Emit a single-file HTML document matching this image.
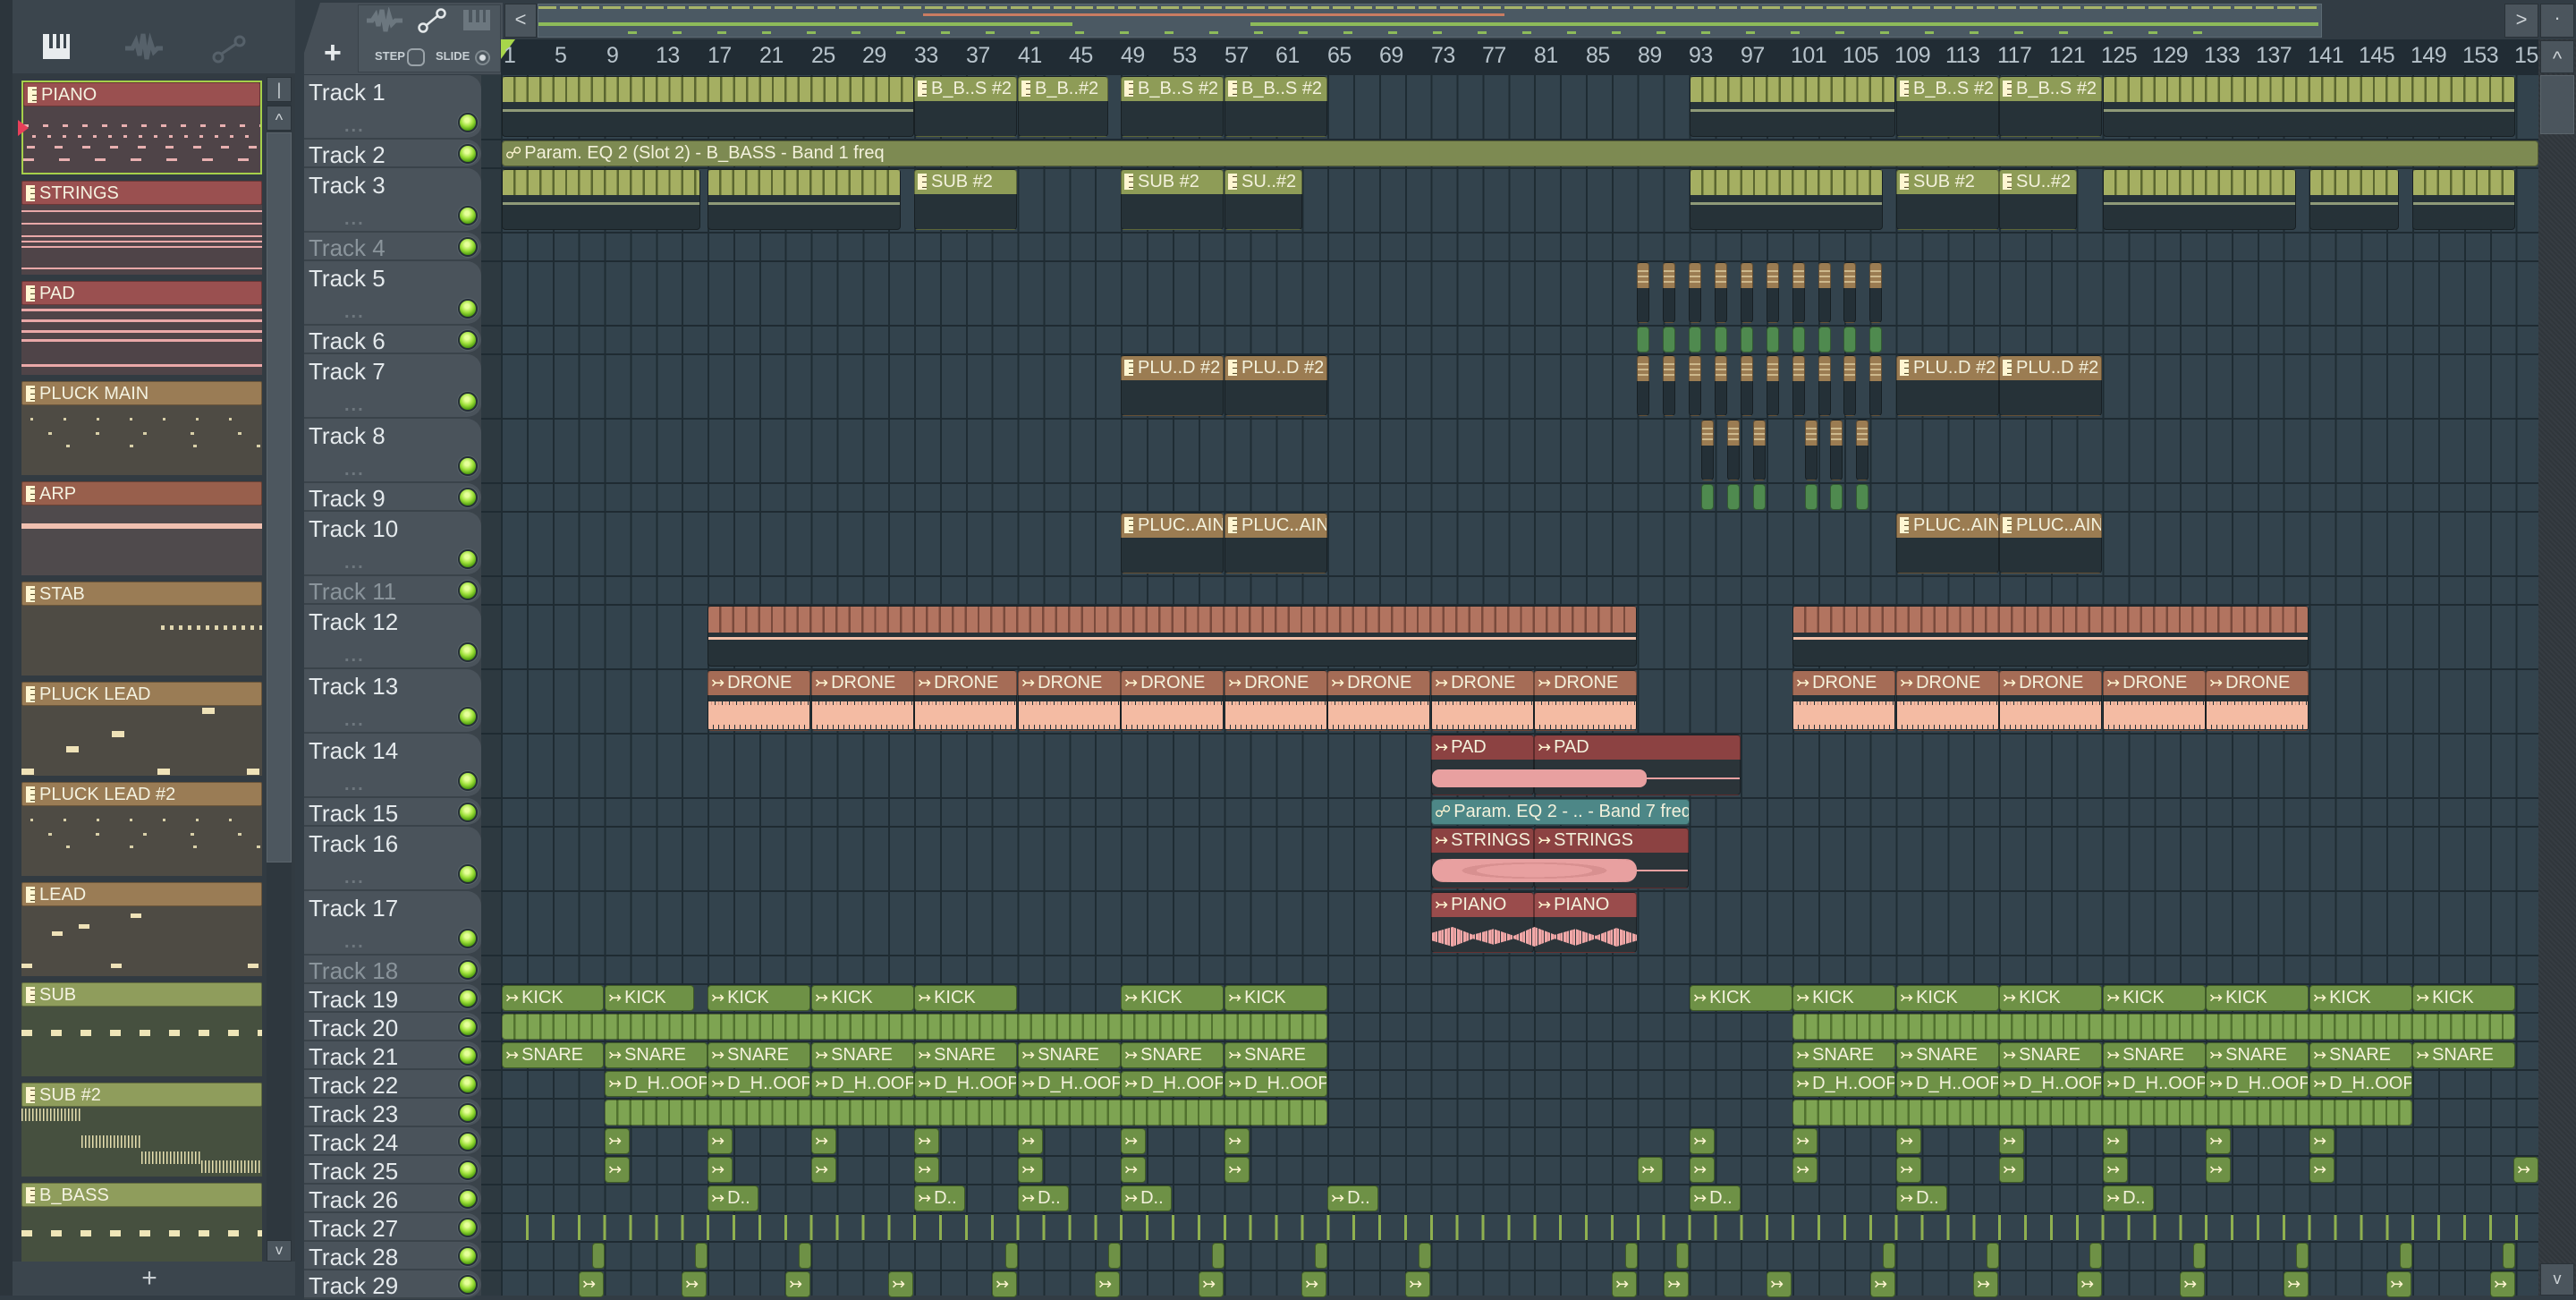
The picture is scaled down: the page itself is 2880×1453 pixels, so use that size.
<!DOCTYPE html>
<html><head><meta charset="utf-8">
<style>
*{box-sizing:border-box}
body{margin:0;width:2880px;height:1448px;background:#323c44;overflow:hidden;position:relative;font-family:"Liberation Sans","DejaVu Sans",sans-serif}
.a{position:absolute}
/* grid */
#grid{position:absolute;left:560px;top:84px;width:2278px;height:1364px;background-color:#33434d;
background-image:repeating-linear-gradient(90deg,#1f2c33 0 2px,transparent 2px 28.88px);}
.rl{position:absolute;left:538px;width:2300px;height:2px;background:#1f2b32}
/* ruler */
#ruler{position:absolute;left:560px;top:44px;width:2278px;height:40px;background:#212c34}
.rn{position:absolute;top:4px;font-size:25px;color:#b7c3cb;letter-spacing:-0.5px}
/* track headers */
.th{position:absolute;left:340px;width:198px;background:#4a535b;border-radius:0 16px 16px 0;border-bottom:2px solid #3a434a}
.th .n{position:absolute;left:5px;top:4px;font-size:26px;color:#e4e9ec}
.th.off .n{color:#8a949b}
.th .d{position:absolute;left:45px;top:46px;font-size:20px;color:#6e777e;letter-spacing:2px;font-weight:bold}
.led{position:absolute;left:512px;width:22px;height:22px;border-radius:50%;background:radial-gradient(circle at 45% 35%,#e6ff9a 0 15%,#9ee03a 45%,#4d9a10 75%);border:2px solid #253036;box-shadow:0 0 0 1px #5a646b}
/* clips */
.c{position:absolute;border-radius:4px;overflow:hidden;white-space:nowrap;font-size:20px;line-height:27px;color:#f3f1dc;padding-left:3px;border:1px solid rgba(0,0,0,.35)}
.t{height:68px}.s{height:29px}
.g.t{background:linear-gradient(#8e9c57 0 27px,#263238 27px)}
.g.s{background:#8e9c57}
.gs.t{background:repeating-linear-gradient(90deg,#a5af62 0 12px,#5a6630 12px 14.44px) 0 0/100% 28px no-repeat,linear-gradient(#8f9a78,#8f9a78) 0 36px/100% 3px no-repeat,#263238}
.gs.s{background:repeating-linear-gradient(90deg,#7ea452 0 12px,#51722f 12px 14.44px)}
.tn.t{background:linear-gradient(#9b7c52 0 27px,#263238 27px)}
.tns{background:repeating-linear-gradient(#9b7c52 0 4px,#cdb88c 4px 6px) 0 4px/100% 22px no-repeat,linear-gradient(#9b7c52 0 28px,#243037 28px)}
.ag{background:#4f8a4f;height:29px}
.sa.t{background:repeating-linear-gradient(90deg,#b27460 0 12px,#7a4a3c 12px 14.44px) 0 0/100% 29px no-repeat,linear-gradient(#f2c0a8,#f2c0a8) 0 34px/100% 3px no-repeat,#263238}
.dr.t{background:repeating-linear-gradient(90deg,#f4bba3 0 3px,#d79a86 3px 4px,#f4bba3 4px 7px,#263238 7px 8px) 0 34px/100% 4px no-repeat,repeating-linear-gradient(90deg,#f4bba3 0 5px,#263238 5px 6px) 0 60px/100% 5px no-repeat,linear-gradient(#f4bba3,#f4bba3) 0 38px/100% 22px no-repeat,linear-gradient(#a56c56 0 27px,#263238 27px)}
.rd.t{background:linear-gradient(#8c4242 0 27px,#2b3439 27px)}
.rd2.t{background:linear-gradient(#9a4c4c 0 27px,#2b3439 27px)}
.wv{position:absolute;background:#e8a0a0;border-radius:8px}
.tl{background:#4d8787;height:29px}
.au{background:#6e9146;border-color:#3f5a27}
.ol{background:#7d8a52}
.pi{display:inline-block;width:10px;height:18px;vertical-align:-3px;margin-right:5px;background:repeating-linear-gradient(#fff6d2 0 2px,#f0e6bc 2px 3px,#5a5030 3px 4px,#fff6d2 4px 6px);border-left:5px solid #fff6d2}
.ai{font-size:18px;margin-right:3px;color:#fff6d2}
.tick{position:absolute;top:1358px;height:28px;left:588px;width:2228px;background:repeating-linear-gradient(90deg,#8fb050 0 3px,transparent 3px 28.88px)}
/* picker */
.pk{position:absolute;left:24px;width:269px;height:105px;overflow:hidden}
.pk .h{height:27px;font-size:20px;line-height:27px;color:#f4f2e0;padding-left:4px;border:1px solid rgba(0,0,0,.3);border-radius:2px}
.pk .b{height:78px}
.red .h{background:#9a5050}.red .b{background:#4f4448}
.tan .h{background:#9a7c55}.tan .b{background:#4e4b44}
.arp .h{background:#985f4c}.arp .b{background:#4f4a4c}
.grn .h{background:#8f9d5c}.grn .b{background:#46503f}
.btn{position:absolute;background:#4b555d;border:1px solid #2a3238;color:#cdd3d7;text-align:center}
</style></head><body>

<!-- left panel -->
<div class="a" style="left:0;top:0;width:14px;height:1448px;background:#2c353c"></div>
<div class="a" style="left:14px;top:0;width:316px;height:1448px;background:#3b454d"></div>
<div class="a" style="left:14px;top:82px;width:316px;height:1332px;background:#323b42"></div>
<!-- top left icons -->
<svg class="a" style="left:46px;top:36px" width="36" height="34"><rect x="2" y="2" width="30" height="28" fill="#e8ecee"/><rect x="9" y="2" width="4" height="16" fill="#3b454d"/><rect x="17" y="2" width="4" height="16" fill="#3b454d"/><rect x="25" y="2" width="3" height="16" fill="#3b454d"/></svg>
<svg class="a" style="left:138px;top:36px" width="44" height="36"><path d="M2 18h8l4-8 4 16 4-24 4 28 4-20 4 12 4-4h6" stroke="#56616a" stroke-width="5" fill="none"/></svg>
<svg class="a" style="left:236px;top:38px" width="40" height="34"><circle cx="8" cy="26" r="5" stroke="#56616a" stroke-width="3" fill="none"/><circle cx="32" cy="8" r="5" stroke="#56616a" stroke-width="3" fill="none"/><path d="M12 22L28 11" stroke="#56616a" stroke-width="3"/></svg>

<div class="pk red" style="top:90px;border:2px solid #a6d04a"><div class="h"><span class="pi"></span>PIANO</div><div class="b" style="background:repeating-linear-gradient(90deg,#e8b0b0 0 6px,transparent 6px 22px) 0 20px/100% 3px no-repeat,repeating-linear-gradient(90deg,#e8b0b0 0 4px,transparent 4px 17px) 10px 32px/100% 3px no-repeat,repeating-linear-gradient(90deg,#e8b0b0 0 9px,transparent 9px 31px) 4px 44px/100% 3px no-repeat,repeating-linear-gradient(90deg,#e8b0b0 0 12px,transparent 12px 40px) 0 58px/100% 3px no-repeat,#4f4448"></div></div>
<div class="a" style="left:20px;top:134px;width:0;height:0;border-left:12px solid #e8405a;border-top:9px solid transparent;border-bottom:9px solid transparent"></div>
<div class="pk red" style="top:202px"><div class="h"><span class="pi"></span>STRINGS</div><div class="b" style="background:linear-gradient(#e8a8a8,#e8a8a8) 0 6px/100% 2px no-repeat,linear-gradient(#e8a8a8,#e8a8a8) 0 20px/100% 2px no-repeat,linear-gradient(#e8a8a8,#e8a8a8) 0 34px/100% 2px no-repeat,linear-gradient(#e8a8a8,#e8a8a8) 0 40px/100% 2px no-repeat,linear-gradient(#e8a8a8,#e8a8a8) 0 46px/100% 2px no-repeat,linear-gradient(#e8a8a8,#e8a8a8) 0 70px/100% 2px no-repeat,#4f4448"></div></div>
<div class="pk red" style="top:314px"><div class="h"><span class="pi"></span>PAD</div><div class="b" style="background:linear-gradient(#eaa8a8,#eaa8a8) 0 4px/100% 3px no-repeat,linear-gradient(#eaa8a8,#eaa8a8) 0 16px/100% 3px no-repeat,linear-gradient(#eaa8a8,#eaa8a8) 0 28px/100% 3px no-repeat,linear-gradient(#eaa8a8,#eaa8a8) 0 38px/100% 3px no-repeat,linear-gradient(#eaa8a8,#eaa8a8) 0 66px/100% 3px no-repeat,#4f4448"></div></div>
<div class="pk tan" style="top:426px"><div class="h"><span class="pi"></span>PLUCK MAIN</div><div class="b" style="background:repeating-linear-gradient(90deg,#d8cfa8 0 3px,transparent 3px 37px) 10px 14px/100% 3px no-repeat,repeating-linear-gradient(90deg,#d8cfa8 0 4px,transparent 4px 53px) 30px 30px/100% 3px no-repeat,repeating-linear-gradient(90deg,#d8cfa8 0 4px,transparent 4px 71px) 50px 44px/100% 3px no-repeat,#4e4b44"></div></div>
<div class="pk arp" style="top:538px"><div class="h"><span class="pi"></span>ARP</div><div class="b" style="background:linear-gradient(#f0c0b0,#f0c0b0) 0 20px/100% 6px no-repeat,#4f4a4c"></div></div>
<div class="pk tan" style="top:650px"><div class="h"><span class="pi"></span>STAB</div><div class="b" style="background:repeating-linear-gradient(90deg,#e0d6b0 0 4px,transparent 4px 10px) 156px 22px/120px 5px no-repeat,#4e4b44"></div></div>
<div class="pk tan" style="top:762px"><div class="h"><span class="pi"></span>PLUCK LEAD</div><div class="b" style="background:linear-gradient(#efe2b8,#efe2b8) 202px 2px/14px 7px no-repeat,linear-gradient(#efe2b8,#efe2b8) 101px 28px/14px 7px no-repeat,linear-gradient(#efe2b8,#efe2b8) 50px 45px/14px 7px no-repeat,linear-gradient(#efe2b8,#efe2b8) 0 70px/14px 7px no-repeat,linear-gradient(#efe2b8,#efe2b8) 152px 70px/14px 7px no-repeat,linear-gradient(#efe2b8,#efe2b8) 252px 70px/14px 7px no-repeat,#4e4b44"></div></div>
<div class="pk tan" style="top:874px"><div class="h"><span class="pi"></span>PLUCK LEAD #2</div><div class="b" style="background:repeating-linear-gradient(90deg,#d8cfa8 0 3px,transparent 3px 37px) 10px 14px/100% 3px no-repeat,repeating-linear-gradient(90deg,#d8cfa8 0 4px,transparent 4px 53px) 30px 30px/100% 3px no-repeat,repeating-linear-gradient(90deg,#d8cfa8 0 4px,transparent 4px 71px) 50px 44px/100% 3px no-repeat,#4e4b44"></div></div>
<div class="pk tan" style="top:986px"><div class="h"><span class="pi"></span>LEAD</div><div class="b" style="background:linear-gradient(#efe2b8,#efe2b8) 122px 8px/12px 5px no-repeat,linear-gradient(#efe2b8,#efe2b8) 64px 20px/12px 5px no-repeat,linear-gradient(#efe2b8,#efe2b8) 34px 28px/12px 5px no-repeat,linear-gradient(#efe2b8,#efe2b8) 0 64px/12px 5px no-repeat,linear-gradient(#efe2b8,#efe2b8) 100px 64px/12px 5px no-repeat,linear-gradient(#efe2b8,#efe2b8) 253px 64px/12px 5px no-repeat,#4e4b44"></div></div>
<div class="pk grn" style="top:1098px"><div class="h"><span class="pi"></span>SUB</div><div class="b" style="background:repeating-linear-gradient(90deg,#efe6b8 0 12px,transparent 12px 33px) 0 26px/100% 7px no-repeat,#46503f"></div></div>
<div class="pk grn" style="top:1210px"><div class="h"><span class="pi"></span>SUB #2</div><div class="b" style="background:repeating-linear-gradient(90deg,#e8e0b0 0 1.5px,transparent 1.5px 4px) 0 2px/67px 14px no-repeat,repeating-linear-gradient(90deg,#e8e0b0 0 1.5px,transparent 1.5px 4px) 67px 32px/67px 14px no-repeat,repeating-linear-gradient(90deg,#e8e0b0 0 1.5px,transparent 1.5px 4px) 134px 50px/67px 14px no-repeat,repeating-linear-gradient(90deg,#e8e0b0 0 1.5px,transparent 1.5px 4px) 201px 60px/68px 14px no-repeat,#46503f"></div></div>
<div class="pk grn" style="top:1322px;height:88px"><div class="h"><span class="pi"></span>B_BASS</div><div class="b" style="background:repeating-linear-gradient(90deg,#efe6b8 0 12px,transparent 12px 33px) 0 26px/100% 7px no-repeat,#46503f"></div></div>
<div class="a" style="left:14px;top:1410px;width:316px;height:38px;background:#3b454d;color:#c8ced2;font-size:30px;text-align:center;line-height:38px;padding-right:10px">+</div>
<!-- picker scroll -->
<div class="a" style="left:298px;top:86px;width:28px;height:1324px;background:#2e373e"></div>
<div class="btn" style="left:298px;top:86px;width:28px;height:28px;font-size:18px;line-height:26px">|</div>
<div class="btn" style="left:298px;top:118px;width:28px;height:28px;font-size:18px;line-height:30px">^</div>
<div class="a" style="left:298px;top:148px;width:28px;height:816px;background:#4d575f;border:1px solid #5b656c"></div>
<div class="btn" style="left:298px;top:1386px;width:28px;height:24px;font-size:16px;line-height:22px">v</div>

<!-- toolbox -->
<div class="a" style="left:340px;top:3px;width:222px;height:80px;background:#464f57;border-radius:14px 0 0 0;clip-path:polygon(18px 0,100% 0,100% 100%,0 100%,0 70%)"></div>
<div class="a" style="left:400px;top:5px;width:160px;height:76px;background:#4c565e;border:1px solid #3a434a"></div>
<div class="a" style="left:362px;top:40px;color:#e6eaec;font-size:34px;font-weight:bold">+</div>
<svg class="a" style="left:408px;top:8px" width="44" height="30"><path d="M2 15h6l4-6 3 12 4-18 4 24 4-18 3 10 4-4h8" stroke="#6c777f" stroke-width="5" fill="none"/></svg>
<svg class="a" style="left:466px;top:8px" width="34" height="30"><circle cx="7" cy="23" r="4.5" stroke="#e4e8ea" stroke-width="2.5" fill="none"/><circle cx="27" cy="7" r="4.5" stroke="#e4e8ea" stroke-width="2.5" fill="none"/><path d="M11 20L23 10" stroke="#e4e8ea" stroke-width="2.5"/></svg>
<svg class="a" style="left:517px;top:10px" width="32" height="26"><rect x="1" y="1" width="30" height="23" fill="#6c777f"/><rect x="7" y="1" width="4" height="14" fill="#4c565e"/><rect x="15" y="1" width="4" height="14" fill="#4c565e"/><rect x="23" y="1" width="3" height="14" fill="#4c565e"/></svg>
<div class="a" style="left:419px;top:55px;font-size:13px;font-weight:bold;color:#c8d0d5">STEP</div>
<div class="a" style="left:455px;top:54px;width:20px;height:20px;border:2px solid #9aa3a9;border-radius:6px"></div>
<div class="a" style="left:487px;top:55px;font-size:13px;font-weight:bold;color:#c8d0d5">SLIDE</div>
<div class="a" style="left:531px;top:56px;width:17px;height:17px;border:2px solid #7f898f;border-radius:50%;background:radial-gradient(#d8dee2 0 3px,transparent 4px)"></div>

<!-- top overview -->
<div class="btn" style="left:564px;top:4px;width:36px;height:38px;font-size:22px;line-height:34px">&lt;</div>
<div class="a" style="left:601px;top:4px;width:1995px;height:38px;background:#4b5963;border:1px solid #5c6a73">
<div class="a" style="left:0;top:2px;width:1990px;height:3px;background:repeating-linear-gradient(90deg,#a7b46a 0 20px,transparent 20px 24px)"></div>
<div class="a" style="left:430px;top:10px;width:650px;height:3px;background:#c97c62"></div>
<div class="a" style="left:0;top:20px;width:1990px;height:4px;background:linear-gradient(90deg,#8dbb5a 0 30%,transparent 30% 40%,#8dbb5a 40% 100%)"></div>
<div class="a" style="left:100px;top:30px;width:1800px;height:3px;background:repeating-linear-gradient(90deg,#8dbb5a 0 10px,transparent 10px 50px)"></div>
</div>
<div class="btn" style="left:2800px;top:4px;width:38px;height:38px;font-size:22px;line-height:34px">&gt;</div>
<div class="btn" style="left:2840px;top:4px;width:38px;height:38px;font-size:22px;line-height:30px">·</div>

<!-- ruler -->
<div id="ruler">
<div class="a" style="left:0;top:0;width:0;height:0;border-left:16px solid #a7d64a;border-right:0;border-bottom:22px solid transparent"></div>
<span class="rn" style="left:3px">1</span><span class="rn" style="left:60px">5</span><span class="rn" style="left:118px">9</span><span class="rn" style="left:173px">13</span><span class="rn" style="left:231px">17</span><span class="rn" style="left:289px">21</span><span class="rn" style="left:347px">25</span><span class="rn" style="left:404px">29</span><span class="rn" style="left:462px">33</span><span class="rn" style="left:520px">37</span><span class="rn" style="left:578px">41</span><span class="rn" style="left:635px">45</span><span class="rn" style="left:693px">49</span><span class="rn" style="left:751px">53</span><span class="rn" style="left:809px">57</span><span class="rn" style="left:866px">61</span><span class="rn" style="left:924px">65</span><span class="rn" style="left:982px">69</span><span class="rn" style="left:1040px">73</span><span class="rn" style="left:1097px">77</span><span class="rn" style="left:1155px">81</span><span class="rn" style="left:1213px">85</span><span class="rn" style="left:1271px">89</span><span class="rn" style="left:1328px">93</span><span class="rn" style="left:1386px">97</span><span class="rn" style="left:1442px">101</span><span class="rn" style="left:1500px">105</span><span class="rn" style="left:1558px">109</span><span class="rn" style="left:1615px">113</span><span class="rn" style="left:1673px">117</span><span class="rn" style="left:1731px">121</span><span class="rn" style="left:1789px">125</span><span class="rn" style="left:1846px">129</span><span class="rn" style="left:1904px">133</span><span class="rn" style="left:1962px">137</span><span class="rn" style="left:2020px">141</span><span class="rn" style="left:2077px">145</span><span class="rn" style="left:2135px">149</span><span class="rn" style="left:2193px">153</span><span class="rn" style="left:2251px">157</span>
</div>

<!-- right scrollbar -->
<div class="a" style="left:2838px;top:44px;width:42px;height:1404px;background:repeating-linear-gradient(45deg,#30363b 0 2px,#363c42 2px 4px)"></div>
<div class="btn" style="left:2840px;top:45px;width:38px;height:37px;font-size:22px;line-height:40px">^</div>
<div class="a" style="left:2840px;top:84px;width:38px;height:66px;background:#4b555d;border:1px solid #5a646b"></div>
<div class="btn" style="left:2840px;top:1412px;width:38px;height:36px;font-size:18px;line-height:32px">v</div>

<!-- grid -->
<div class="a" style="left:538px;top:84px;width:22px;height:1364px;background:#2d3940"></div>
<div id="grid"></div>
<div class="rl" style="top:155px"></div><div class="rl" style="top:187px"></div><div class="rl" style="top:259px"></div><div class="rl" style="top:291px"></div><div class="rl" style="top:363px"></div><div class="rl" style="top:395px"></div><div class="rl" style="top:467px"></div><div class="rl" style="top:539px"></div><div class="rl" style="top:571px"></div><div class="rl" style="top:643px"></div><div class="rl" style="top:675px"></div><div class="rl" style="top:747px"></div><div class="rl" style="top:819px"></div><div class="rl" style="top:891px"></div><div class="rl" style="top:923px"></div><div class="rl" style="top:995px"></div><div class="rl" style="top:1067px"></div><div class="rl" style="top:1099px"></div><div class="rl" style="top:1131px"></div><div class="rl" style="top:1163px"></div><div class="rl" style="top:1195px"></div><div class="rl" style="top:1227px"></div><div class="rl" style="top:1259px"></div><div class="rl" style="top:1291px"></div><div class="rl" style="top:1323px"></div><div class="rl" style="top:1355px"></div><div class="rl" style="top:1387px"></div><div class="rl" style="top:1419px"></div>

<!-- track headers -->
<div class="a" style="left:340px;top:84px;width:198px;height:1364px;background:#3a434a"></div>
<div class="th" style="top:84px;height:72px"><span class="n">Track 1</span><span class="d">...</span></div><div class="led" style="top:126px"></div>
<div class="th" style="top:156px;height:32px"><span class="n" style="top:2px">Track 2</span></div><div class="led" style="top:161px"></div>
<div class="th" style="top:188px;height:72px"><span class="n">Track 3</span><span class="d">...</span></div><div class="led" style="top:230px"></div>
<div class="th off" style="top:260px;height:32px"><span class="n" style="top:2px">Track 4</span></div><div class="led" style="top:265px"></div>
<div class="th" style="top:292px;height:72px"><span class="n">Track 5</span><span class="d">...</span></div><div class="led" style="top:334px"></div>
<div class="th" style="top:364px;height:32px"><span class="n" style="top:2px">Track 6</span></div><div class="led" style="top:369px"></div>
<div class="th" style="top:396px;height:72px"><span class="n">Track 7</span><span class="d">...</span></div><div class="led" style="top:438px"></div>
<div class="th" style="top:468px;height:72px"><span class="n">Track 8</span><span class="d">...</span></div><div class="led" style="top:510px"></div>
<div class="th" style="top:540px;height:32px"><span class="n" style="top:2px">Track 9</span></div><div class="led" style="top:545px"></div>
<div class="th" style="top:572px;height:72px"><span class="n">Track 10</span><span class="d">...</span></div><div class="led" style="top:614px"></div>
<div class="th off" style="top:644px;height:32px"><span class="n" style="top:2px">Track 11</span></div><div class="led" style="top:649px"></div>
<div class="th" style="top:676px;height:72px"><span class="n">Track 12</span><span class="d">...</span></div><div class="led" style="top:718px"></div>
<div class="th" style="top:748px;height:72px"><span class="n">Track 13</span><span class="d">...</span></div><div class="led" style="top:790px"></div>
<div class="th" style="top:820px;height:72px"><span class="n">Track 14</span><span class="d">...</span></div><div class="led" style="top:862px"></div>
<div class="th" style="top:892px;height:32px"><span class="n" style="top:2px">Track 15</span></div><div class="led" style="top:897px"></div>
<div class="th" style="top:924px;height:72px"><span class="n">Track 16</span><span class="d">...</span></div><div class="led" style="top:966px"></div>
<div class="th" style="top:996px;height:72px"><span class="n">Track 17</span><span class="d">...</span></div><div class="led" style="top:1038px"></div>
<div class="th off" style="top:1068px;height:32px"><span class="n" style="top:2px">Track 18</span></div><div class="led" style="top:1073px"></div>
<div class="th" style="top:1100px;height:32px"><span class="n" style="top:2px">Track 19</span></div><div class="led" style="top:1105px"></div>
<div class="th" style="top:1132px;height:32px"><span class="n" style="top:2px">Track 20</span></div><div class="led" style="top:1137px"></div>
<div class="th" style="top:1164px;height:32px"><span class="n" style="top:2px">Track 21</span></div><div class="led" style="top:1169px"></div>
<div class="th" style="top:1196px;height:32px"><span class="n" style="top:2px">Track 22</span></div><div class="led" style="top:1201px"></div>
<div class="th" style="top:1228px;height:32px"><span class="n" style="top:2px">Track 23</span></div><div class="led" style="top:1233px"></div>
<div class="th" style="top:1260px;height:32px"><span class="n" style="top:2px">Track 24</span></div><div class="led" style="top:1265px"></div>
<div class="th" style="top:1292px;height:32px"><span class="n" style="top:2px">Track 25</span></div><div class="led" style="top:1297px"></div>
<div class="th" style="top:1324px;height:32px"><span class="n" style="top:2px">Track 26</span></div><div class="led" style="top:1329px"></div>
<div class="th" style="top:1356px;height:32px"><span class="n" style="top:2px">Track 27</span></div><div class="led" style="top:1361px"></div>
<div class="th" style="top:1388px;height:32px"><span class="n" style="top:2px">Track 28</span></div><div class="led" style="top:1393px"></div>
<div class="th" style="top:1420px;height:32px"><span class="n" style="top:2px">Track 29</span></div><div class="led" style="top:1425px"></div>

<!-- Track 1 -->
<div class="c gs t" style="left:561px;top:85px;width:461px"></div>
<div class="c g t" style="left:1022px;top:85px;width:115px"><span class="pi"></span>B_B..S #2</div>
<div class="c g t" style="left:1138px;top:85px;width:101px"><span class="pi"></span>B_B..#2</div>
<div class="c g t" style="left:1253px;top:85px;width:115px"><span class="pi"></span>B_B..S #2</div>
<div class="c g t" style="left:1369px;top:85px;width:115px"><span class="pi"></span>B_B..S #2</div>
<div class="c gs t" style="left:1889px;top:85px;width:230px"></div>
<div class="c g t" style="left:2120px;top:85px;width:115px"><span class="pi"></span>B_B..S #2</div>
<div class="c g t" style="left:2235px;top:85px;width:115px"><span class="pi"></span>B_B..S #2</div>
<div class="c gs t" style="left:2351px;top:85px;width:461px"></div>
<!-- Track 2 -->
<div class="c ol s" style="left:561px;top:157px;width:2277px"><span class="ai">☍</span>Param. EQ 2 (Slot 2) - B_BASS - Band 1 freq</div>
<!-- Track 3 -->
<div class="c gs t" style="left:561px;top:189px;width:222px"></div>
<div class="c gs t" style="left:791px;top:189px;width:216px"></div>
<div class="c g t" style="left:1022px;top:189px;width:115px"><span class="pi"></span>SUB #2</div>
<div class="c g t" style="left:1253px;top:189px;width:115px"><span class="pi"></span>SUB #2</div>
<div class="c g t" style="left:1369px;top:189px;width:87px"><span class="pi"></span>SU..#2</div>
<div class="c gs t" style="left:1889px;top:189px;width:216px"></div>
<div class="c g t" style="left:2120px;top:189px;width:115px"><span class="pi"></span>SUB #2</div>
<div class="c g t" style="left:2235px;top:189px;width:87px"><span class="pi"></span>SU..#2</div>
<div class="c gs t" style="left:2351px;top:189px;width:216px"></div>
<div class="c gs t" style="left:2582px;top:189px;width:100px"></div>
<div class="c gs t" style="left:2697px;top:189px;width:115px"></div>

<!-- Track 5,6,7 small -->
<div class="c tns t" style="left:1830px;top:293px;width:14px"></div><div class="c tns t" style="left:1859px;top:293px;width:14px"></div><div class="c tns t" style="left:1888px;top:293px;width:14px"></div><div class="c tns t" style="left:1917px;top:293px;width:14px"></div><div class="c tns t" style="left:1946px;top:293px;width:14px"></div><div class="c tns t" style="left:1975px;top:293px;width:14px"></div><div class="c tns t" style="left:2004px;top:293px;width:14px"></div><div class="c tns t" style="left:2033px;top:293px;width:14px"></div><div class="c tns t" style="left:2061px;top:293px;width:14px"></div><div class="c tns t" style="left:2090px;top:293px;width:14px"></div>
<div class="c ag" style="left:1830px;top:365px;width:14px"></div><div class="c ag" style="left:1859px;top:365px;width:14px"></div><div class="c ag" style="left:1888px;top:365px;width:14px"></div><div class="c ag" style="left:1917px;top:365px;width:14px"></div><div class="c ag" style="left:1946px;top:365px;width:14px"></div><div class="c ag" style="left:1975px;top:365px;width:14px"></div><div class="c ag" style="left:2004px;top:365px;width:14px"></div><div class="c ag" style="left:2033px;top:365px;width:14px"></div><div class="c ag" style="left:2061px;top:365px;width:14px"></div><div class="c ag" style="left:2090px;top:365px;width:14px"></div>
<div class="c tns t" style="left:1830px;top:397px;width:14px"></div><div class="c tns t" style="left:1859px;top:397px;width:14px"></div><div class="c tns t" style="left:1888px;top:397px;width:14px"></div><div class="c tns t" style="left:1917px;top:397px;width:14px"></div><div class="c tns t" style="left:1946px;top:397px;width:14px"></div><div class="c tns t" style="left:1975px;top:397px;width:14px"></div><div class="c tns t" style="left:2004px;top:397px;width:14px"></div><div class="c tns t" style="left:2033px;top:397px;width:14px"></div><div class="c tns t" style="left:2061px;top:397px;width:14px"></div><div class="c tns t" style="left:2090px;top:397px;width:14px"></div>
<div class="c tn t" style="left:1253px;top:397px;width:115px"><span class="pi"></span>PLU..D #2</div>
<div class="c tn t" style="left:1369px;top:397px;width:115px"><span class="pi"></span>PLU..D #2</div>
<div class="c tn t" style="left:2120px;top:397px;width:115px"><span class="pi"></span>PLU..D #2</div>
<div class="c tn t" style="left:2235px;top:397px;width:115px"><span class="pi"></span>PLU..D #2</div>
<!-- Track 8,9 -->
<div class="c tns t" style="left:1902px;top:469px;width:14px"></div><div class="c tns t" style="left:1931px;top:469px;width:14px"></div><div class="c tns t" style="left:1960px;top:469px;width:14px"></div><div class="c tns t" style="left:2018px;top:469px;width:14px"></div><div class="c tns t" style="left:2046px;top:469px;width:14px"></div><div class="c tns t" style="left:2075px;top:469px;width:14px"></div>
<div class="c ag" style="left:1902px;top:541px;width:14px"></div><div class="c ag" style="left:1931px;top:541px;width:14px"></div><div class="c ag" style="left:1960px;top:541px;width:14px"></div><div class="c ag" style="left:2018px;top:541px;width:14px"></div><div class="c ag" style="left:2046px;top:541px;width:14px"></div><div class="c ag" style="left:2075px;top:541px;width:14px"></div>
<!-- Track 10 -->
<div class="c tn t" style="left:1253px;top:573px;width:115px"><span class="pi"></span>PLUC..AIN</div>
<div class="c tn t" style="left:1369px;top:573px;width:115px"><span class="pi"></span>PLUC..AIN</div>
<div class="c tn t" style="left:2120px;top:573px;width:115px"><span class="pi"></span>PLUC..AIN</div>
<div class="c tn t" style="left:2235px;top:573px;width:115px"><span class="pi"></span>PLUC..AIN</div>
<!-- Track 12 -->
<div class="c sa t" style="left:791px;top:677px;width:1039px"></div>
<div class="c sa t" style="left:2004px;top:677px;width:577px"></div>
<!-- Track 13 -->
<div class="c dr t" style="left:791px;top:749px;width:115px"><span class="ai">↣</span>DRONE</div>
<div class="c dr t" style="left:907px;top:749px;width:115px"><span class="ai">↣</span>DRONE</div>
<div class="c dr t" style="left:1022px;top:749px;width:115px"><span class="ai">↣</span>DRONE</div>
<div class="c dr t" style="left:1138px;top:749px;width:115px"><span class="ai">↣</span>DRONE</div>
<div class="c dr t" style="left:1253px;top:749px;width:115px"><span class="ai">↣</span>DRONE</div>
<div class="c dr t" style="left:1369px;top:749px;width:115px"><span class="ai">↣</span>DRONE</div>
<div class="c dr t" style="left:1484px;top:749px;width:115px"><span class="ai">↣</span>DRONE</div>
<div class="c dr t" style="left:1600px;top:749px;width:115px"><span class="ai">↣</span>DRONE</div>
<div class="c dr t" style="left:1715px;top:749px;width:115px"><span class="ai">↣</span>DRONE</div>
<div class="c dr t" style="left:2004px;top:749px;width:115px"><span class="ai">↣</span>DRONE</div>
<div class="c dr t" style="left:2120px;top:749px;width:115px"><span class="ai">↣</span>DRONE</div>
<div class="c dr t" style="left:2235px;top:749px;width:115px"><span class="ai">↣</span>DRONE</div>
<div class="c dr t" style="left:2351px;top:749px;width:115px"><span class="ai">↣</span>DRONE</div>
<div class="c dr t" style="left:2466px;top:749px;width:115px"><span class="ai">↣</span>DRONE</div>
<!-- Track 14 -->
<div class="c rd t" style="left:1600px;top:821px;width:115px"><span class="ai">↣</span>PAD</div>
<div class="c rd t" style="left:1715px;top:821px;width:231px"><span class="ai">↣</span>PAD</div>
<div class="wv" style="left:1601px;top:860px;width:240px;height:20px"></div>
<div class="a" style="left:1840px;top:869px;width:105px;height:2px;background:#e8a0a0"></div>
<!-- Track 15 -->
<div class="c tl" style="left:1600px;top:893px;width:289px"><span class="ai">☍</span>Param. EQ 2 - .. - Band 7 freq</div>
<!-- Track 16 -->
<div class="c rd t" style="left:1600px;top:925px;width:115px"><span class="ai">↣</span>STRINGS</div>
<div class="c rd t" style="left:1715px;top:925px;width:173px"><span class="ai">↣</span>STRINGS</div>
<div class="wv" style="left:1601px;top:960px;width:229px;height:26px;background:repeating-radial-gradient(ellipse at 50% 50%,#e8a0a0 0 40%,#d89090 40% 50%);border-radius:12px"></div>
<div class="a" style="left:1830px;top:972px;width:57px;height:2px;background:#e8a0a0"></div>
<!-- Track 17 -->
<div class="c rd2 t" style="left:1600px;top:997px;width:115px"><span class="ai">↣</span>PIANO</div>
<div class="c rd2 t" style="left:1715px;top:997px;width:115px"><span class="ai">↣</span>PIANO</div>
<div class="a" style="left:1601px;top:1036px;width:229px;height:22px;background:repeating-linear-gradient(90deg,#f0a8a8 0 3px,#c98888 3px 4px,#f0a8a8 4px 6px,transparent 6px 7px);clip-path:polygon(0 30%,10% 0,20% 40%,30% 10%,40% 45%,50% 0,60% 40%,70% 10%,80% 45%,90% 5%,100% 40%,100% 70%,90% 100%,80% 60%,70% 95%,60% 60%,50% 100%,40% 60%,30% 90%,20% 60%,10% 100%,0 70%)"></div>

<!-- Track 19 KICK -->
<div class="c au s" style="left:561px;top:1101px;width:114px"><span class="ai">↣</span>KICK</div>
<div class="c au s" style="left:676px;top:1101px;width:100px"><span class="ai">↣</span>KICK</div>
<div class="c au s" style="left:791px;top:1101px;width:115px"><span class="ai">↣</span>KICK</div>
<div class="c au s" style="left:907px;top:1101px;width:115px"><span class="ai">↣</span>KICK</div>
<div class="c au s" style="left:1022px;top:1101px;width:115px"><span class="ai">↣</span>KICK</div>
<div class="c au s" style="left:1253px;top:1101px;width:115px"><span class="ai">↣</span>KICK</div>
<div class="c au s" style="left:1369px;top:1101px;width:115px"><span class="ai">↣</span>KICK</div>
<div class="c au s" style="left:1889px;top:1101px;width:115px"><span class="ai">↣</span>KICK</div>
<div class="c au s" style="left:2004px;top:1101px;width:115px"><span class="ai">↣</span>KICK</div>
<div class="c au s" style="left:2120px;top:1101px;width:115px"><span class="ai">↣</span>KICK</div>
<div class="c au s" style="left:2235px;top:1101px;width:115px"><span class="ai">↣</span>KICK</div>
<div class="c au s" style="left:2351px;top:1101px;width:115px"><span class="ai">↣</span>KICK</div>
<div class="c au s" style="left:2466px;top:1101px;width:115px"><span class="ai">↣</span>KICK</div>
<div class="c au s" style="left:2582px;top:1101px;width:115px"><span class="ai">↣</span>KICK</div>
<div class="c au s" style="left:2697px;top:1101px;width:115px"><span class="ai">↣</span>KICK</div>
<!-- Track 20 -->
<div class="c gs s" style="left:561px;top:1133px;width:923px"></div>
<div class="c gs s" style="left:2004px;top:1133px;width:808px"></div>
<!-- Track 21 SNARE -->
<div class="c au s" style="left:561px;top:1165px;width:114px"><span class="ai">↣</span>SNARE</div>
<div class="c au s" style="left:676px;top:1165px;width:115px"><span class="ai">↣</span>SNARE</div>
<div class="c au s" style="left:791px;top:1165px;width:115px"><span class="ai">↣</span>SNARE</div>
<div class="c au s" style="left:907px;top:1165px;width:115px"><span class="ai">↣</span>SNARE</div>
<div class="c au s" style="left:1022px;top:1165px;width:115px"><span class="ai">↣</span>SNARE</div>
<div class="c au s" style="left:1138px;top:1165px;width:115px"><span class="ai">↣</span>SNARE</div>
<div class="c au s" style="left:1253px;top:1165px;width:115px"><span class="ai">↣</span>SNARE</div>
<div class="c au s" style="left:1369px;top:1165px;width:115px"><span class="ai">↣</span>SNARE</div>
<div class="c au s" style="left:2004px;top:1165px;width:115px"><span class="ai">↣</span>SNARE</div>
<div class="c au s" style="left:2120px;top:1165px;width:115px"><span class="ai">↣</span>SNARE</div>
<div class="c au s" style="left:2235px;top:1165px;width:115px"><span class="ai">↣</span>SNARE</div>
<div class="c au s" style="left:2351px;top:1165px;width:115px"><span class="ai">↣</span>SNARE</div>
<div class="c au s" style="left:2466px;top:1165px;width:115px"><span class="ai">↣</span>SNARE</div>
<div class="c au s" style="left:2582px;top:1165px;width:115px"><span class="ai">↣</span>SNARE</div>
<div class="c au s" style="left:2697px;top:1165px;width:115px"><span class="ai">↣</span>SNARE</div>
<!-- Track 22 -->
<div class="c au s" style="left:676px;top:1197px;width:115px"><span class="ai">↣</span>D_H..OOP</div>
<div class="c au s" style="left:791px;top:1197px;width:115px"><span class="ai">↣</span>D_H..OOP</div>
<div class="c au s" style="left:907px;top:1197px;width:115px"><span class="ai">↣</span>D_H..OOP</div>
<div class="c au s" style="left:1022px;top:1197px;width:115px"><span class="ai">↣</span>D_H..OOP</div>
<div class="c au s" style="left:1138px;top:1197px;width:115px"><span class="ai">↣</span>D_H..OOP</div>
<div class="c au s" style="left:1253px;top:1197px;width:115px"><span class="ai">↣</span>D_H..OOP</div>
<div class="c au s" style="left:1369px;top:1197px;width:115px"><span class="ai">↣</span>D_H..OOP</div>
<div class="c au s" style="left:2004px;top:1197px;width:115px"><span class="ai">↣</span>D_H..OOP</div>
<div class="c au s" style="left:2120px;top:1197px;width:115px"><span class="ai">↣</span>D_H..OOP</div>
<div class="c au s" style="left:2235px;top:1197px;width:115px"><span class="ai">↣</span>D_H..OOP</div>
<div class="c au s" style="left:2351px;top:1197px;width:115px"><span class="ai">↣</span>D_H..OOP</div>
<div class="c au s" style="left:2466px;top:1197px;width:115px"><span class="ai">↣</span>D_H..OOP</div>
<div class="c au s" style="left:2582px;top:1197px;width:115px"><span class="ai">↣</span>D_H..OOP</div>
<!-- Track 23 -->
<div class="c gs s" style="left:676px;top:1229px;width:808px"></div>
<div class="c gs s" style="left:2004px;top:1229px;width:693px"></div>
<!-- Track 24 -->
<div class="c au s" style="left:676px;top:1261px;width:28px"><span class="ai">↣</span></div><div class="c au s" style="left:791px;top:1261px;width:28px"><span class="ai">↣</span></div><div class="c au s" style="left:907px;top:1261px;width:28px"><span class="ai">↣</span></div><div class="c au s" style="left:1022px;top:1261px;width:28px"><span class="ai">↣</span></div><div class="c au s" style="left:1138px;top:1261px;width:28px"><span class="ai">↣</span></div><div class="c au s" style="left:1253px;top:1261px;width:28px"><span class="ai">↣</span></div><div class="c au s" style="left:1369px;top:1261px;width:28px"><span class="ai">↣</span></div><div class="c au s" style="left:1889px;top:1261px;width:28px"><span class="ai">↣</span></div><div class="c au s" style="left:2004px;top:1261px;width:28px"><span class="ai">↣</span></div><div class="c au s" style="left:2120px;top:1261px;width:28px"><span class="ai">↣</span></div><div class="c au s" style="left:2235px;top:1261px;width:28px"><span class="ai">↣</span></div><div class="c au s" style="left:2351px;top:1261px;width:28px"><span class="ai">↣</span></div><div class="c au s" style="left:2466px;top:1261px;width:28px"><span class="ai">↣</span></div><div class="c au s" style="left:2582px;top:1261px;width:28px"><span class="ai">↣</span></div>
<!-- Track 25 -->
<div class="c au s" style="left:676px;top:1293px;width:28px"><span class="ai">↣</span></div><div class="c au s" style="left:791px;top:1293px;width:28px"><span class="ai">↣</span></div><div class="c au s" style="left:907px;top:1293px;width:28px"><span class="ai">↣</span></div><div class="c au s" style="left:1022px;top:1293px;width:28px"><span class="ai">↣</span></div><div class="c au s" style="left:1138px;top:1293px;width:28px"><span class="ai">↣</span></div><div class="c au s" style="left:1253px;top:1293px;width:28px"><span class="ai">↣</span></div><div class="c au s" style="left:1369px;top:1293px;width:28px"><span class="ai">↣</span></div><div class="c au s" style="left:1831px;top:1293px;width:28px"><span class="ai">↣</span></div><div class="c au s" style="left:1889px;top:1293px;width:28px"><span class="ai">↣</span></div><div class="c au s" style="left:2004px;top:1293px;width:28px"><span class="ai">↣</span></div><div class="c au s" style="left:2120px;top:1293px;width:28px"><span class="ai">↣</span></div><div class="c au s" style="left:2235px;top:1293px;width:28px"><span class="ai">↣</span></div><div class="c au s" style="left:2351px;top:1293px;width:28px"><span class="ai">↣</span></div><div class="c au s" style="left:2466px;top:1293px;width:28px"><span class="ai">↣</span></div><div class="c au s" style="left:2582px;top:1293px;width:28px"><span class="ai">↣</span></div><div class="c au s" style="left:2810px;top:1293px;width:28px"><span class="ai">↣</span></div>
<!-- Track 26 -->
<div class="c au s" style="left:791px;top:1325px;width:57px"><span class="ai">↣</span>D..</div>
<div class="c au s" style="left:1022px;top:1325px;width:57px"><span class="ai">↣</span>D..</div>
<div class="c au s" style="left:1138px;top:1325px;width:57px"><span class="ai">↣</span>D..</div>
<div class="c au s" style="left:1253px;top:1325px;width:57px"><span class="ai">↣</span>D..</div>
<div class="c au s" style="left:1484px;top:1325px;width:57px"><span class="ai">↣</span>D..</div>
<div class="c au s" style="left:1889px;top:1325px;width:57px"><span class="ai">↣</span>D..</div>
<div class="c au s" style="left:2120px;top:1325px;width:57px"><span class="ai">↣</span>D..</div>
<div class="c au s" style="left:2351px;top:1325px;width:57px"><span class="ai">↣</span>D..</div>
<!-- Track 27 -->
<div class="tick"></div>
<!-- Track 28 -->
<div class="c au s" style="left:662px;top:1389px;width:14px"></div><div class="c au s" style="left:777px;top:1389px;width:14px"></div><div class="c au s" style="left:893px;top:1389px;width:14px"></div><div class="c au s" style="left:1124px;top:1389px;width:14px"></div><div class="c au s" style="left:1239px;top:1389px;width:14px"></div><div class="c au s" style="left:1355px;top:1389px;width:14px"></div><div class="c au s" style="left:1470px;top:1389px;width:14px"></div><div class="c au s" style="left:1586px;top:1389px;width:14px"></div><div class="c au s" style="left:1817px;top:1389px;width:14px"></div><div class="c au s" style="left:1874px;top:1389px;width:14px"></div><div class="c au s" style="left:2105px;top:1389px;width:14px"></div><div class="c au s" style="left:2221px;top:1389px;width:14px"></div><div class="c au s" style="left:2336px;top:1389px;width:14px"></div><div class="c au s" style="left:2452px;top:1389px;width:14px"></div><div class="c au s" style="left:2567px;top:1389px;width:14px"></div><div class="c au s" style="left:2683px;top:1389px;width:14px"></div><div class="c au s" style="left:2798px;top:1389px;width:14px"></div>
<!-- Track 29 -->
<div class="c au s" style="left:647px;top:1421px;width:28px"><span class="ai">↣</span></div><div class="c au s" style="left:762px;top:1421px;width:28px"><span class="ai">↣</span></div><div class="c au s" style="left:878px;top:1421px;width:28px"><span class="ai">↣</span></div><div class="c au s" style="left:993px;top:1421px;width:28px"><span class="ai">↣</span></div><div class="c au s" style="left:1109px;top:1421px;width:28px"><span class="ai">↣</span></div><div class="c au s" style="left:1224px;top:1421px;width:28px"><span class="ai">↣</span></div><div class="c au s" style="left:1340px;top:1421px;width:28px"><span class="ai">↣</span></div><div class="c au s" style="left:1455px;top:1421px;width:28px"><span class="ai">↣</span></div><div class="c au s" style="left:1571px;top:1421px;width:28px"><span class="ai">↣</span></div><div class="c au s" style="left:1802px;top:1421px;width:28px"><span class="ai">↣</span></div><div class="c au s" style="left:1860px;top:1421px;width:28px"><span class="ai">↣</span></div><div class="c au s" style="left:1975px;top:1421px;width:28px"><span class="ai">↣</span></div><div class="c au s" style="left:2091px;top:1421px;width:28px"><span class="ai">↣</span></div><div class="c au s" style="left:2206px;top:1421px;width:28px"><span class="ai">↣</span></div><div class="c au s" style="left:2322px;top:1421px;width:28px"><span class="ai">↣</span></div><div class="c au s" style="left:2437px;top:1421px;width:28px"><span class="ai">↣</span></div><div class="c au s" style="left:2553px;top:1421px;width:28px"><span class="ai">↣</span></div><div class="c au s" style="left:2668px;top:1421px;width:28px"><span class="ai">↣</span></div><div class="c au s" style="left:2784px;top:1421px;width:28px"><span class="ai">↣</span></div>

</body></html>
